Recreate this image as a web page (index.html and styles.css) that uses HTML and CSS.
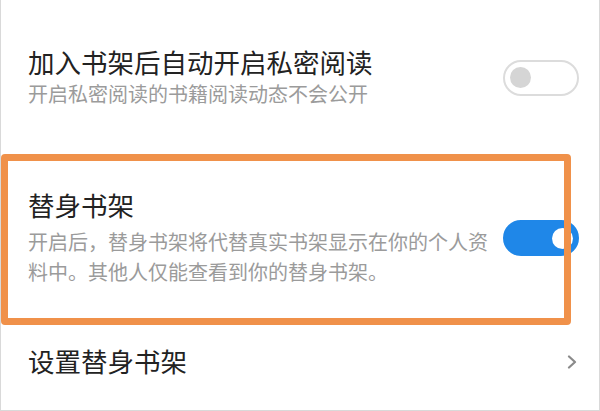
FILE: index.html
```html
<!DOCTYPE html>
<html lang="zh-CN">
<head>
<meta charset="utf-8">
<title>替身书架设置</title>
<link rel="stylesheet" href="styles.css">
</head>
<body>
<div class="page">
  <div class="row row-private">
    <div class="text">
      <div class="title">加入书架后自动开启私密阅读</div>
      <div class="sub">开启私密阅读的书籍阅读动态不会公开</div>
    </div>
    <div class="toggle off"><span class="knob"></span></div>
  </div>

  <div class="row row-double">
    <div class="text">
      <div class="title">替身书架</div>
      <div class="sub">开启后，替身书架将代替真实书架显示在你的个人资料中。其他人仅能查看到你的替身书架。</div>
    </div>
    <div class="toggle on"><span class="knob"></span></div>
  </div>

  <div class="row row-link">
    <div class="title">设置替身书架</div>
    <svg class="chevron" width="10" height="14" viewBox="0 0 10 14">
      <polyline points="2,1.5 8,7 2,12.5" fill="none" stroke="#8a8a8a" stroke-width="2.2" stroke-linecap="round" stroke-linejoin="round"/>
    </svg>
  </div>

  <div class="highlight"></div>
</div>
</body>
</html>
```

FILE: styles.css
```css
* { box-sizing: border-box; }

html, body {
  margin: 0;
  padding: 0;
  background: #ffffff;
}

.page {
  position: relative;
  width: 600px;
  height: 411px;
  overflow: hidden;
  background: #ffffff;
  border-left: 1px solid #d9d9d9;
  border-right: 1px solid #d9d9d9;
  border-bottom: 1px solid #d9d9d9;
  padding-top: 46px;
  font-family: "Noto Sans CJK SC", "Noto Sans", sans-serif;
}

.row {
  display: flex;
  align-items: center;
  padding: 0 20px 0 27px;
}

.text {
  flex: 1;
  min-width: 0;
  margin-right: 4px;
}

.title {
  font-size: 26.5px;
  line-height: 32px;
  color: #222222;
}

.sub {
  font-size: 20px;
  line-height: 30px;
  color: #9b9b9b;
}

.row-private .sub { margin-top: 1px; }

.row-double { margin-top: 80px; }
.row-double .sub { margin-top: 6px; }

.row-link {
  margin-top: 58px;
  justify-content: space-between;
}

.chevron {
  margin-right: 2px;
  margin-top: 1px;
}

.toggle {
  flex: none;
  width: 76px;
  height: 36px;
  border-radius: 18px;
  border: 2.5px solid #dcdcdc;
  display: flex;
  align-items: center;
  padding: 0 4.5px;
}

.toggle .knob {
  width: 21px;
  height: 21px;
  border-radius: 50%;
  background: #d5d5d5;
}

.toggle.on {
  background: #1f87e8;
  border-color: #1f87e8;
  justify-content: flex-end;
}

.toggle.on .knob { background: #ffffff; }

.highlight {
  position: absolute;
  left: 0;
  top: 154px;
  width: 570px;
  height: 171px;
  border: 7px solid #f0914a;
  border-radius: 4px;
  pointer-events: none;
}
```
